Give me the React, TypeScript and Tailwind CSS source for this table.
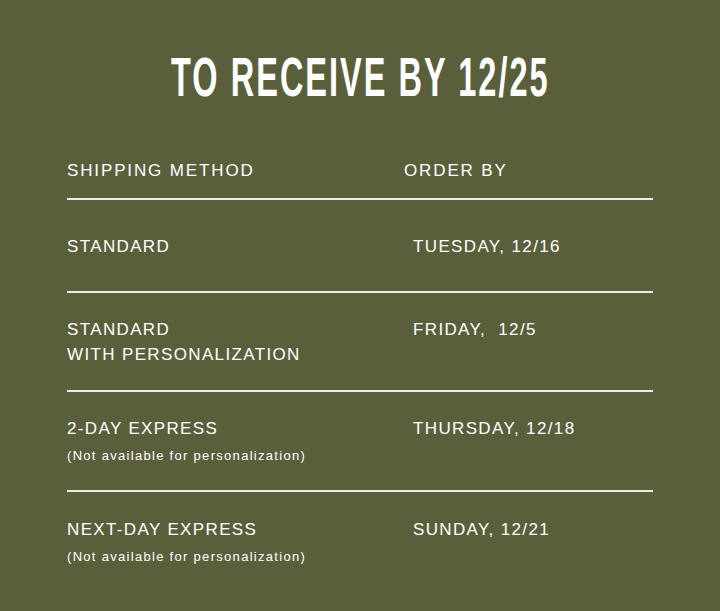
const rows = [
  { method: ["STANDARD"], note: "", date: "TUESDAY, 12/16", pad: "pt-[34px] pb-[32px]" },
  { method: ["STANDARD", "WITH PERSONALIZATION"], note: "", date: "FRIDAY,  12/5", pad: "pt-[24px] pb-[23px]" },
  { method: ["2-DAY EXPRESS"], note: "(Not available for personalization)", date: "THURSDAY, 12/18", pad: "pt-[24px] pb-[24px]" },
  { method: ["NEXT-DAY EXPRESS"], note: "(Not available for personalization)", date: "SUNDAY, 12/21", pad: "pt-[25px] pb-[24px]" },
];

export default function App() {
  return (
    <div
      className="w-[720px] h-[611px] bg-[#5a5f3b] text-white overflow-hidden"
      style={{ fontFamily: '"Liberation Sans", Arial, sans-serif' }}
    >
      <div className="flex justify-center pt-[48px]">
        <h1 className="text-[56px] leading-[58px] font-bold scale-x-[0.58] whitespace-nowrap tracking-[3.5px]">
          TO RECEIVE BY 12/25
        </h1>
      </div>

      <div className="mx-[67px] mt-[52px]">
        <div className="grid grid-cols-[337px_1fr] text-[17px] tracking-[0.11em] pb-[14px] border-b-2 border-[#ecebe4]">
          <div>SHIPPING METHOD</div>
          <div>ORDER BY</div>
        </div>

        {rows.map((r, i) => (
          <div
            key={i}
            className={`grid grid-cols-[346px_1fr] ${r.pad} ${i < rows.length - 1 ? "border-b-2 border-[#ecebe4]" : ""}`}
          >
            <div>
              {r.method.map((m) => (
                <div key={m} className="text-[17px] leading-[25px] tracking-[0.08em]">
                  {m}
                </div>
              ))}
              {r.note && (
                <div className="text-[13px] leading-[20px] tracking-[0.1em] mt-[5px]">{r.note}</div>
              )}
            </div>
            <div className="text-[17px] leading-[25px] tracking-[0.08em] whitespace-pre">{r.date}</div>
          </div>
        ))}
      </div>
    </div>
  );
}
